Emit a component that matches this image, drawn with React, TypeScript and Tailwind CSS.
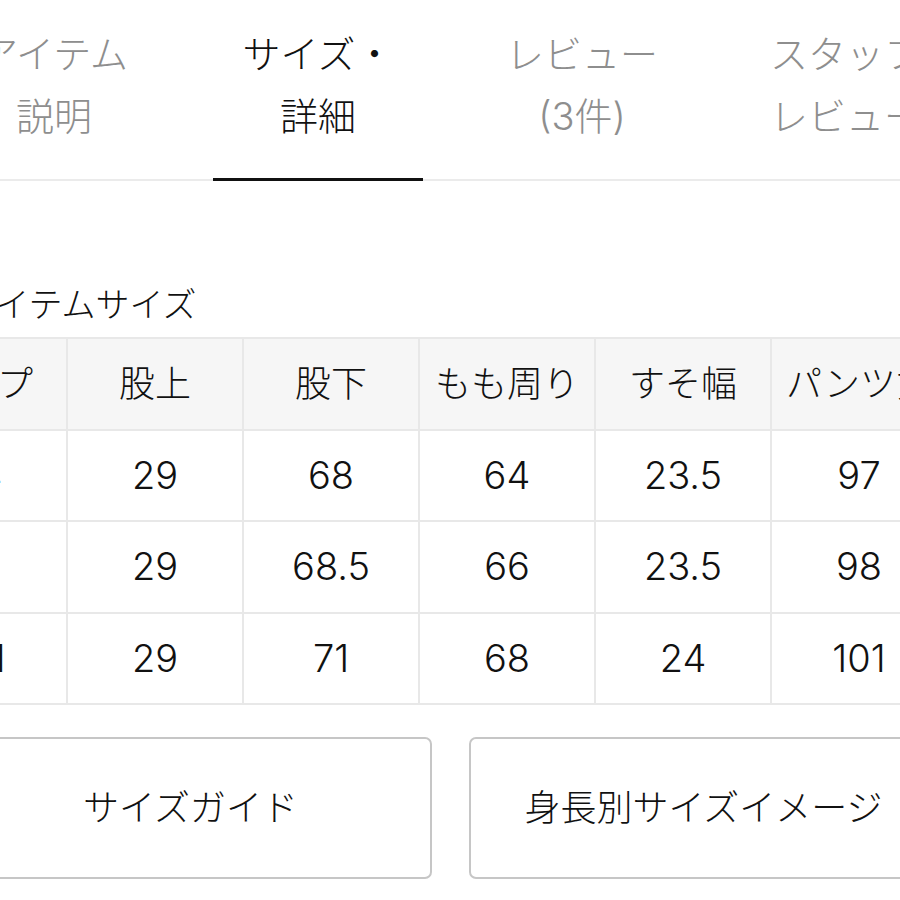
import React from "react";

const tabs = [
  { l1: "アイテム", l2: "説明", active: false },
  { l1: "サイズ・", l2: "詳細", active: true },
  { l1: "レビュー", l2: "(3件)", active: false },
  { l1: "スタッフ", l2: "レビュー", active: false },
];

const headers = ["ヒップ", "股上", "股下", "もも周り", "すそ幅", "パンツ丈"];
const rows = [
  ["94", "29", "68", "64", "23.5", "97"],
  ["97", "29", "68.5", "66", "23.5", "98"],
  ["101", "29", "71", "68", "24", "101"],
];

export default function App() {
  return (
    <div className="w-[900px] h-[900px] overflow-hidden bg-white font-light font-[family-name:Inter,'Noto_Sans_CJK_JP',sans-serif]">
      {/* Tabs */}
      <div className="flex w-[1056px] ml-[-78px] border-b-2 border-[#ebebeb]">
        {tabs.map((t, i) => (
          <div key={i} className="w-[264px] h-[179px] shrink-0 flex flex-col items-center">
            <div
              className={`pt-[23px] text-center text-[38px] leading-[62px] whitespace-nowrap ${
                t.active ? "text-[#111111]" : "text-[#8e8e8e]"
              }`}
            >
              <div>{t.l1}</div>
              <div>{t.l2}</div>
            </div>
            {t.active && <div className="mt-auto mb-[-2px] h-[3px] w-[210px] bg-[#111111]" />}
          </div>
        ))}
      </div>

      {/* Content */}
      <div className="ml-[-37px] w-[975px]">
        <h2 className="mt-[102px] text-[34px] leading-[44px] text-[#111111] font-light">アイテムサイズ</h2>

        <div className="mt-[10px] ml-[-73px]">
          <table className="border-collapse">
            <thead>
              <tr>
                {headers.map((h) => (
                  <th
                    key={h}
                    className="w-[176px] min-w-[176px] h-[91.5px] border-2 border-[#e8e8e8] bg-[#f6f6f6] text-[36px] font-light text-[#111111] text-center whitespace-nowrap"
                  >
                    {h}
                  </th>
                ))}
              </tr>
            </thead>
            <tbody>
              {rows.map((r, ri) => (
                <tr key={ri}>
                  {r.map((c, ci) => (
                    <td
                      key={ci}
                      className="w-[176px] min-w-[176px] h-[91.5px] border-2 border-[#e8e8e8] text-[38px] text-[#111111] text-center"
                    >
                      {c}
                    </td>
                  ))}
                </tr>
              ))}
            </tbody>
          </table>
        </div>

        <div className="mt-[32px] ml-[-14px] flex gap-[37px]">
          <button className="w-[483px] h-[142px] shrink-0 border-2 border-[#c6c6c6] rounded-[7px] text-[36px] text-[#111111] bg-white">
            サイズガイド
          </button>
          <button className="w-[469px] h-[142px] shrink-0 border-2 border-[#c6c6c6] rounded-[7px] text-[36px] text-[#111111] bg-white">
            身長別サイズイメージ
          </button>
        </div>
      </div>
    </div>
  );
}
